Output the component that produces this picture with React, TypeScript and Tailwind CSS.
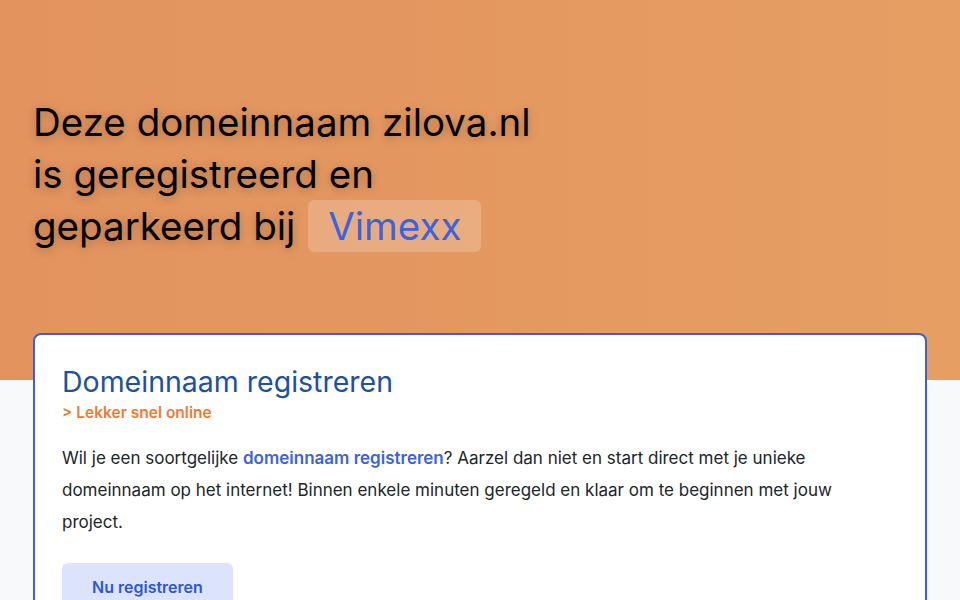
import React from "react";

export default function App() {
  return (
    <div className="min-h-screen bg-[#f8f9fa] font-['Inter','Noto_Sans',sans-serif]">
      <section className="h-[380px] bg-linear-to-r from-[#e2935e] to-[#e69e63] px-[33px] pt-[96px]">
        <h1 className="text-[38.5px] leading-[52px] text-black [text-shadow:0_2px_10px_rgba(0,0,0,0.25)]">
          Deze domeinnaam zilova.nl
          <br />
          is geregistreerd en
          <br />
          geparkeerd bij{" "}
          <span className="ml-[2px] inline-block rounded-md bg-white/20 px-[20px] text-[#3a63e0] [text-shadow:none]">
            Vimexx
          </span>
        </h1>
      </section>

      <main className="relative -mt-[47px] px-[33px]">
        <div className="rounded-[8px] border-2 border-[#3b5fd9] bg-white px-[27px] pt-[30px] pb-8">
          <h2 className="text-[28.5px] leading-[34px] text-[#22509a]">
            Domeinnaam registreren
          </h2>
          <p className="mt-[2px] text-[15.5px] font-semibold text-[#ee7b35]">
            &gt; Lekker snel online
          </p>
          <p className="mt-[18px] max-w-[800px] text-[17px] leading-[32px] text-[#212529]">
            Wil je een soortgelijke{" "}
            <a className="font-semibold text-[#3a63e0]">domeinnaam registreren</a>?
            Aarzel dan niet en start direct met je unieke domeinnaam op het
            internet! Binnen enkele minuten geregeld en klaar om te beginnen met
            jouw project.
          </p>
          <button className="mt-[25px] h-[48px] rounded-[6px] bg-[#dbe3fd] px-[30px] text-[16px] font-semibold text-[#2f56d4]">
            Nu registreren
          </button>
        </div>
      </main>
    </div>
  );
}
